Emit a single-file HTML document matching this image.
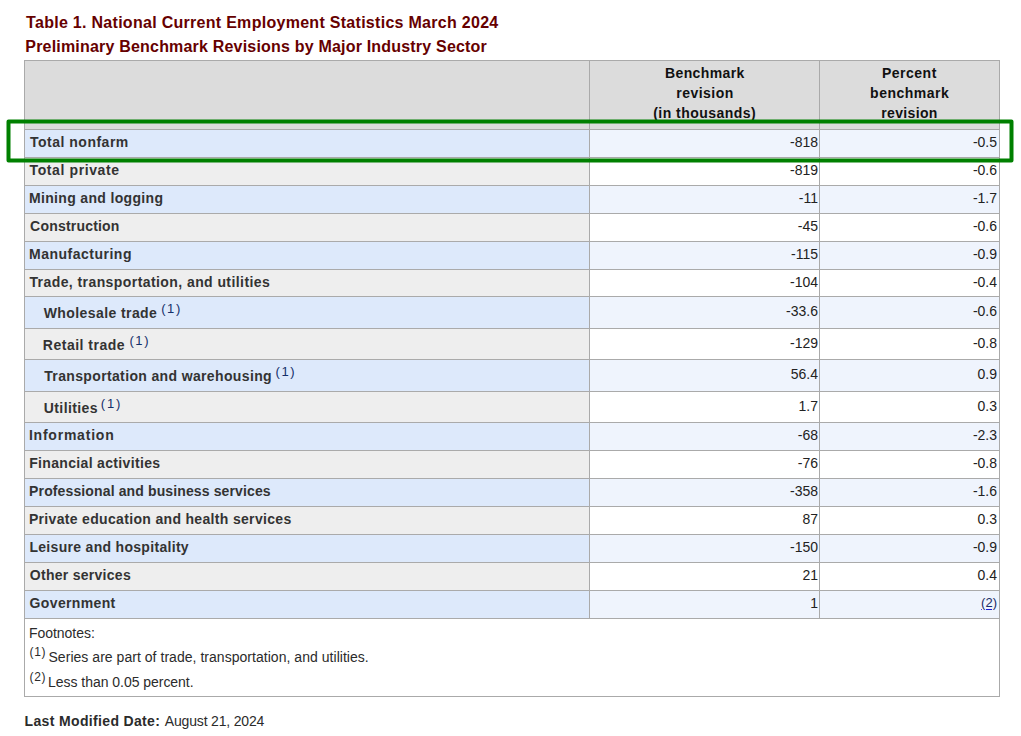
<!DOCTYPE html>
<html><head><meta charset="utf-8"><style>
*{margin:0;padding:0;box-sizing:border-box}
html,body{width:1021px;height:736px;background:#fff;overflow:hidden}
body{font-family:"Liberation Sans",sans-serif;color:#222;position:relative}
.a{position:absolute}
.t{position:absolute;white-space:nowrap}
.title{font-weight:bold;font-size:16px;color:#660000;line-height:20px}
.ln{background:#aaa}
.b1{background:#dde9fb} .b2{background:#eff4fd} .g1{background:#eeeeee} .g2{background:#fff}
.lab{font-weight:bold;font-size:14px;color:#333;line-height:16px}
.num{font-size:14px;color:#222;line-height:16px}
.hd{font-weight:bold;font-size:14px;color:#111;line-height:16px}
.sp{font-size:13px;color:#142f6a;font-weight:normal;line-height:16px}
.fn{font-size:14px;color:#2b2b2b;line-height:16px}
.fs{font-size:12px;color:#2b2b2b;line-height:14px}
</style></head><body>
<div class="a" style="left:24px;top:60px;width:976px;height:69px;background:#dcdcdc"></div>
<div class="a b1" style="left:25px;top:130px;width:564px;height:27px"></div>
<div class="a b2" style="left:590px;top:130px;width:409px;height:27px"></div>
<div class="a g1" style="left:25px;top:158px;width:564px;height:27px"></div>
<div class="a g2" style="left:590px;top:158px;width:409px;height:27px"></div>
<div class="a b1" style="left:25px;top:186px;width:564px;height:27px"></div>
<div class="a b2" style="left:590px;top:186px;width:409px;height:27px"></div>
<div class="a g1" style="left:25px;top:214px;width:564px;height:27px"></div>
<div class="a g2" style="left:590px;top:214px;width:409px;height:27px"></div>
<div class="a b1" style="left:25px;top:242px;width:564px;height:27px"></div>
<div class="a b2" style="left:590px;top:242px;width:409px;height:27px"></div>
<div class="a g1" style="left:25px;top:270px;width:564px;height:26px"></div>
<div class="a g2" style="left:590px;top:270px;width:409px;height:26px"></div>
<div class="a b1" style="left:25px;top:297px;width:564px;height:31px"></div>
<div class="a b2" style="left:590px;top:297px;width:409px;height:31px"></div>
<div class="a g1" style="left:25px;top:329px;width:564px;height:30px"></div>
<div class="a g2" style="left:590px;top:329px;width:409px;height:30px"></div>
<div class="a b1" style="left:25px;top:360px;width:564px;height:31px"></div>
<div class="a b2" style="left:590px;top:360px;width:409px;height:31px"></div>
<div class="a g1" style="left:25px;top:392px;width:564px;height:30px"></div>
<div class="a g2" style="left:590px;top:392px;width:409px;height:30px"></div>
<div class="a b1" style="left:25px;top:423px;width:564px;height:27px"></div>
<div class="a b2" style="left:590px;top:423px;width:409px;height:27px"></div>
<div class="a g1" style="left:25px;top:451px;width:564px;height:27px"></div>
<div class="a g2" style="left:590px;top:451px;width:409px;height:27px"></div>
<div class="a b1" style="left:25px;top:479px;width:564px;height:27px"></div>
<div class="a b2" style="left:590px;top:479px;width:409px;height:27px"></div>
<div class="a g1" style="left:25px;top:507px;width:564px;height:27px"></div>
<div class="a g2" style="left:590px;top:507px;width:409px;height:27px"></div>
<div class="a b1" style="left:25px;top:535px;width:564px;height:27px"></div>
<div class="a b2" style="left:590px;top:535px;width:409px;height:27px"></div>
<div class="a g1" style="left:25px;top:563px;width:564px;height:27px"></div>
<div class="a g2" style="left:590px;top:563px;width:409px;height:27px"></div>
<div class="a b1" style="left:25px;top:591px;width:564px;height:27px"></div>
<div class="a b2" style="left:590px;top:591px;width:409px;height:27px"></div>
<div class="a ln" style="left:24px;top:60px;width:976px;height:1px"></div>
<div class="a ln" style="left:24px;top:696px;width:976px;height:1px"></div>
<div class="a ln" style="left:24px;top:60px;width:1px;height:637px"></div>
<div class="a ln" style="left:999px;top:60px;width:1px;height:637px"></div>
<div class="a ln" style="left:24px;top:129px;width:976px;height:1px"></div>
<div class="a ln" style="left:24px;top:157px;width:976px;height:1px"></div>
<div class="a ln" style="left:24px;top:185px;width:976px;height:1px"></div>
<div class="a ln" style="left:24px;top:213px;width:976px;height:1px"></div>
<div class="a ln" style="left:24px;top:241px;width:976px;height:1px"></div>
<div class="a ln" style="left:24px;top:269px;width:976px;height:1px"></div>
<div class="a ln" style="left:24px;top:296px;width:976px;height:1px"></div>
<div class="a ln" style="left:24px;top:328px;width:976px;height:1px"></div>
<div class="a ln" style="left:24px;top:359px;width:976px;height:1px"></div>
<div class="a ln" style="left:24px;top:391px;width:976px;height:1px"></div>
<div class="a ln" style="left:24px;top:422px;width:976px;height:1px"></div>
<div class="a ln" style="left:24px;top:450px;width:976px;height:1px"></div>
<div class="a ln" style="left:24px;top:478px;width:976px;height:1px"></div>
<div class="a ln" style="left:24px;top:506px;width:976px;height:1px"></div>
<div class="a ln" style="left:24px;top:534px;width:976px;height:1px"></div>
<div class="a ln" style="left:24px;top:562px;width:976px;height:1px"></div>
<div class="a ln" style="left:24px;top:590px;width:976px;height:1px"></div>
<div class="a ln" style="left:24px;top:618px;width:976px;height:1px"></div>
<div class="a ln" style="left:589px;top:60px;width:1px;height:558px"></div>
<div class="a ln" style="left:819px;top:60px;width:1px;height:558px"></div>
<div id="ti1" class="t title" style="left:26.10px;top:12.80px;letter-spacing:0.286px;">Table 1. National Current Employment Statistics March 2024</div>
<div id="ti2" class="t title" style="left:25.30px;top:37.30px;letter-spacing:0.194px;">Preliminary Benchmark Revisions by Major Industry Sector</div>
<div id="h2_0" class="t hd" style="left:704.80px;top:65.20px;letter-spacing:0.376px;transform:translateX(-50%);">Benchmark</div>
<div id="h3_0" class="t hd" style="left:909.40px;top:65.20px;letter-spacing:0.500px;transform:translateX(-50%);">Percent</div>
<div id="h2_1" class="t hd" style="left:705.00px;top:85.00px;letter-spacing:0.487px;transform:translateX(-50%);">revision</div>
<div id="h3_1" class="t hd" style="left:909.70px;top:85.30px;letter-spacing:0.500px;transform:translateX(-50%);">benchmark</div>
<div id="h2_2" class="t hd" style="left:704.70px;top:105.00px;letter-spacing:0.462px;transform:translateX(-50%);">(in thousands)</div>
<div id="h3_2" class="t hd" style="left:909.50px;top:105.00px;letter-spacing:0.342px;transform:translateX(-50%);">revision</div>
<div id="r0" class="t lab" style="left:30.00px;top:134.00px;letter-spacing:0.500px;">Total nonfarm</div>
<div id="n0" class="t num" style="right:203.00px;top:134.00px;letter-spacing:0.000px;">-818</div>
<div id="p0" class="t num" style="right:24.00px;top:134.00px;letter-spacing:0.000px;">-0.5</div>
<div id="r1" class="t lab" style="left:29.60px;top:162.00px;letter-spacing:0.601px;">Total private</div>
<div id="n1" class="t num" style="right:203.00px;top:162.00px;letter-spacing:0.000px;">-819</div>
<div id="p1" class="t num" style="right:24.00px;top:162.00px;letter-spacing:0.000px;">-0.6</div>
<div id="r2" class="t lab" style="left:28.90px;top:190.00px;letter-spacing:0.343px;">Mining and logging</div>
<div id="n2" class="t num" style="right:203.00px;top:190.00px;letter-spacing:0.000px;">-11</div>
<div id="p2" class="t num" style="right:24.00px;top:190.00px;letter-spacing:0.000px;">-1.7</div>
<div id="r3" class="t lab" style="left:30.10px;top:218.00px;letter-spacing:0.199px;">Construction</div>
<div id="n3" class="t num" style="right:203.00px;top:218.00px;letter-spacing:0.000px;">-45</div>
<div id="p3" class="t num" style="right:24.00px;top:218.00px;letter-spacing:0.000px;">-0.6</div>
<div id="r4" class="t lab" style="left:29.00px;top:246.00px;letter-spacing:0.500px;">Manufacturing</div>
<div id="n4" class="t num" style="right:203.00px;top:246.00px;letter-spacing:0.000px;">-115</div>
<div id="p4" class="t num" style="right:24.00px;top:246.00px;letter-spacing:0.000px;">-0.9</div>
<div id="r5" class="t lab" style="left:29.40px;top:274.00px;letter-spacing:0.423px;">Trade, transportation, and utilities</div>
<div id="n5" class="t num" style="right:203.00px;top:274.00px;letter-spacing:0.000px;">-104</div>
<div id="p5" class="t num" style="right:24.00px;top:274.00px;letter-spacing:0.000px;">-0.4</div>
<div id="r6" class="t lab" style="left:43.70px;top:304.80px;letter-spacing:0.414px;">Wholesale trade</div>
<div id="s6" class="t sp" style="left:161.20px;top:301.00px;letter-spacing:1.600px;">(1)</div>
<div id="n6" class="t num" style="right:203.00px;top:303.00px;letter-spacing:0.000px;">-33.6</div>
<div id="p6" class="t num" style="right:24.00px;top:303.00px;letter-spacing:0.000px;">-0.6</div>
<div id="r7" class="t lab" style="left:42.80px;top:336.80px;letter-spacing:0.509px;">Retail trade</div>
<div id="s7" class="t sp" style="left:129.40px;top:333.00px;letter-spacing:1.600px;">(1)</div>
<div id="n7" class="t num" style="right:203.00px;top:335.00px;letter-spacing:0.000px;">-129</div>
<div id="p7" class="t num" style="right:24.00px;top:335.00px;letter-spacing:0.000px;">-0.8</div>
<div id="r8" class="t lab" style="left:44.20px;top:367.80px;letter-spacing:0.358px;">Transportation and warehousing</div>
<div id="s8" class="t sp" style="left:275.50px;top:364.00px;letter-spacing:1.600px;">(1)</div>
<div id="n8" class="t num" style="right:203.00px;top:366.00px;letter-spacing:0.000px;">56.4</div>
<div id="p8" class="t num" style="right:24.00px;top:366.00px;letter-spacing:0.000px;">0.9</div>
<div id="r9" class="t lab" style="left:43.80px;top:399.80px;letter-spacing:0.400px;">Utilities</div>
<div id="s9" class="t sp" style="left:100.80px;top:396.00px;letter-spacing:1.800px;">(1)</div>
<div id="n9" class="t num" style="right:203.00px;top:398.00px;letter-spacing:0.000px;">1.7</div>
<div id="p9" class="t num" style="right:24.00px;top:398.00px;letter-spacing:0.000px;">0.3</div>
<div id="r10" class="t lab" style="left:28.90px;top:427.00px;letter-spacing:0.780px;">Information</div>
<div id="n10" class="t num" style="right:203.00px;top:427.00px;letter-spacing:0.000px;">-68</div>
<div id="p10" class="t num" style="right:24.00px;top:427.00px;letter-spacing:0.000px;">-2.3</div>
<div id="r11" class="t lab" style="left:29.20px;top:455.00px;letter-spacing:0.336px;">Financial activities</div>
<div id="n11" class="t num" style="right:203.00px;top:455.00px;letter-spacing:0.000px;">-76</div>
<div id="p11" class="t num" style="right:24.00px;top:455.00px;letter-spacing:0.000px;">-0.8</div>
<div id="r12" class="t lab" style="left:29.10px;top:483.00px;letter-spacing:0.127px;">Professional and business services</div>
<div id="n12" class="t num" style="right:203.00px;top:483.00px;letter-spacing:0.000px;">-358</div>
<div id="p12" class="t num" style="right:24.00px;top:483.00px;letter-spacing:0.000px;">-1.6</div>
<div id="r13" class="t lab" style="left:28.90px;top:511.00px;letter-spacing:0.328px;">Private education and health services</div>
<div id="n13" class="t num" style="right:203.00px;top:511.00px;letter-spacing:0.000px;">87</div>
<div id="p13" class="t num" style="right:24.00px;top:511.00px;letter-spacing:0.000px;">0.3</div>
<div id="r14" class="t lab" style="left:29.40px;top:539.00px;letter-spacing:0.308px;">Leisure and hospitality</div>
<div id="n14" class="t num" style="right:203.00px;top:539.00px;letter-spacing:0.000px;">-150</div>
<div id="p14" class="t num" style="right:24.00px;top:539.00px;letter-spacing:0.000px;">-0.9</div>
<div id="r15" class="t lab" style="left:29.80px;top:567.00px;letter-spacing:0.276px;">Other services</div>
<div id="n15" class="t num" style="right:203.00px;top:567.00px;letter-spacing:0.000px;">21</div>
<div id="p15" class="t num" style="right:24.00px;top:567.00px;letter-spacing:0.000px;">0.4</div>
<div id="r16" class="t lab" style="left:29.60px;top:595.00px;letter-spacing:0.357px;">Government</div>
<div id="n16" class="t num" style="right:203.00px;top:595.00px;letter-spacing:0.000px;">1</div>
<div id="p16" class="t num" style="right:24.00px;top:595.00px;letter-spacing:0.000px;color:#1a2d66;font-size:13px">(2)</div>
<div class="a" style="left:986px;top:609px;width:6px;height:1px;background:#1c1cd8"></div>
<div class="a" style="left:981px;top:609px;width:1px;height:1px;background:#4a4ae0"></div>
<div id="fn0" class="t fn" style="left:28.90px;top:625.30px;letter-spacing:-0.021px;">Footnotes:</div>
<div id="fs1" class="t fs" style="left:29.60px;top:644.70px;letter-spacing:0.600px;">(1)</div>
<div id="fn1" class="t fn" style="left:48.50px;top:648.90px;letter-spacing:0.036px;">Series are part of trade, transportation, and utilities.</div>
<div id="fs2" class="t fs" style="left:29.60px;top:669.70px;letter-spacing:0.600px;">(2)</div>
<div id="fn2" class="t fn" style="left:48.10px;top:673.90px;letter-spacing:-0.037px;">Less than 0.05 percent.</div>
<div id="lm0" class="t fn" style="left:24.60px;top:712.70px;letter-spacing:0.344px;"><b>Last Modified Date:</b></div>
<div id="lm1" class="t fn" style="left:164.80px;top:713.40px;letter-spacing:-0.172px;">August 21, 2024</div>
<svg class="a" style="left:0;top:0" width="1021" height="736" viewBox="0 0 1021 736"><rect x="8.5" y="121.4" width="1003" height="39" fill="none" stroke-linejoin="round" stroke="#008000" stroke-width="4"/></svg>
</body></html>
